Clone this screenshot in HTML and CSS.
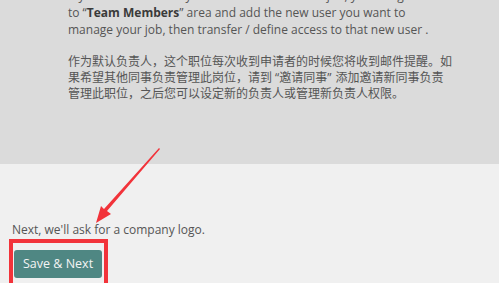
FILE: index.html
```html
<!DOCTYPE html>
<html lang="en">
<head>
  <meta charset="UTF-8" />
  <title>Job Owner</title>
  <link rel="stylesheet" href="styles.css">
</head>
<body>

<!-- Owner info -->
<section class="info-panel">
  <div class="info-text">
    <p>If you want somebody else to take care of this job, you can go<br>to &ldquo;<b>Team Members</b>&rdquo; area and add the new user you want to manage your job, then transfer / define access to that new user .</p>
    <p class="zh">作为默认负责人，这个职位每次收到申请者的时候您将收到邮件提醒。如果希望其他同事负责管理此岗位，请到<span class="term">“邀请同事”</span>添加邀请新同事负责管理此职位，之后您可以设定新的负责人或管理新负责人权限。</p>
  </div>
</section>

<!-- Next step -->
<section class="next-step">
  <p class="next-note">Next, we'll ask for a company logo.</p>
  <div class="highlight">
    <button class="save-button">Save &amp; Next</button>
  </div>
</section>

<!-- annotation arrow -->
<svg class="arrow" width="499" height="283" viewBox="0 0 499 283">
  <polygon points="159,148 160,149 107,211 111,214 96,223 101,206 104,209" fill="#f2333a"/>
</svg>

</body>
</html>
```

FILE: styles.css
```css
/* Global Styling */
body {
  font-family: 'Open Sans', sans-serif;
  margin: 0;
  padding: 0;
  background: #f0f0f0;
  color: #555;
  font-size: 12px;
  overflow: hidden;
}

/* Info Panel */
.info-panel {
  background: #dbdbdb;
  height: 164px;
  padding-left: 68px;
  overflow: hidden;
}

.info-text {
  width: 384px;
  margin-top: -13.5px;
}

.info-text p {
  margin: 0 0 16px;
  line-height: 17px;
}

.info-text b {
  color: #3a3a3a;
}

.info-text .zh {
  font-family: 'Open Sans', 'Noto Sans CJK SC', sans-serif;
  line-height: 16px;
  word-break: break-all;
}

.zh .term {
  padding: 0 4px 0 3px;
}

/* Next Step */
.next-step {
  padding: 57px 0 0 12px;
}

.next-note {
  margin: 0 0 1px;
  line-height: 17px;
}

.highlight {
  display: inline-block;
  margin-left: -3px;
  padding: 7px 2px 8px 1px;
  border: 4px solid #f2333a;
}

.save-button {
  display: block;
  background: #4f8783;
  color: #f4f4f4;
  font-family: 'Open Sans', sans-serif;
  font-size: 12.5px;
  border: none;
  border-radius: 3px;
  padding: 5px 9px 6px;
  line-height: 17px;
  cursor: pointer;
}

/* Arrow */
.arrow {
  position: absolute;
  left: 0;
  top: 0;
  pointer-events: none;
}
```
